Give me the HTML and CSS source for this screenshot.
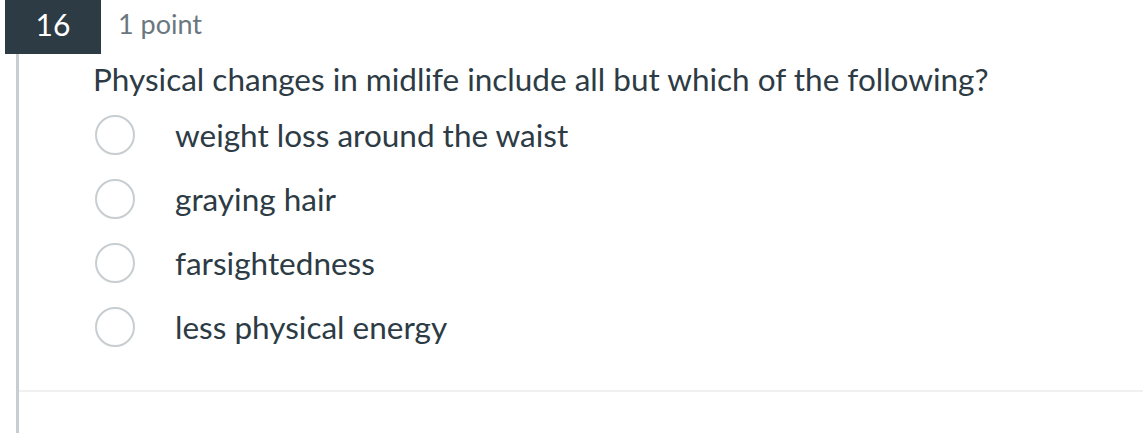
FILE: index.html
```html
<!DOCTYPE html>
<html>
<head>
<meta charset="utf-8">
<link rel="stylesheet" href="styles.css">
</head>
<body>
<div class="question">
  <div class="header">
    <div class="num">16</div>
    <div class="points">1 point</div>
  </div>
  <div class="body">
    <div class="prompt">Physical changes in midlife include all but which of the following?</div>
    <ul class="answers">
      <li class="answer"><span class="radio"></span><span class="label">weight loss around the waist</span></li>
      <li class="answer"><span class="radio"></span><span class="label">graying hair</span></li>
      <li class="answer"><span class="radio"></span><span class="label">farsightedness</span></li>
      <li class="answer"><span class="radio"></span><span class="label">less physical energy</span></li>
    </ul>
    <div class="divider"></div>
    <div class="footer"></div>
  </div>
</div>
</body>
</html>
```
FILE: styles.css
```css
html, body {
  margin: 0;
  padding: 0;
  background: #ffffff;
}
body {
  font-family: Lato, "Liberation Sans", sans-serif;
  color: #2d3b45;
  width: 1143px;
  height: 433px;
  overflow: hidden;
}
.question {
  display: flex;
  flex-direction: column;
}
.header {
  display: flex;
  align-items: flex-start;
  height: 54px;
}
.num {
  margin-left: 5px;
  width: 96px;
  height: 54px;
  background: #2d3b45;
  color: #ffffff;
  font-size: 30px;
  display: flex;
  align-items: center;
  justify-content: center;
  line-height: 1;
  padding-bottom: 6px;
  box-sizing: border-box;
}
.points {
  margin-left: 17px;
  margin-top: 8px;
  font-size: 27px;
  color: #6b7780;
  line-height: 32px;
}
.body {
  margin-left: 16px;
  border-left: 3px solid #c7cdd1;
  height: 379px;
}
.prompt {
  padding-left: 74px;
  padding-top: 6px;
  font-size: 31.5px;
  line-height: 38px;
}
.answers {
  list-style: none;
  margin: 17px 0 0 0;
  padding: 0 0 0 76px;
  display: flex;
  flex-direction: column;
  gap: 24px;
}
.answer {
  display: flex;
  align-items: center;
  height: 40px;
}
.radio {
  width: 36px;
  height: 36px;
  border: 2px solid #c7cdd1;
  border-radius: 50%;
  flex: none;
}
.label {
  margin-left: 40px;
  font-size: 31.5px;
  line-height: 38px;
}
.divider {
  margin-top: 43px;
  height: 2px;
  background: #f0f0f0;
}
```
